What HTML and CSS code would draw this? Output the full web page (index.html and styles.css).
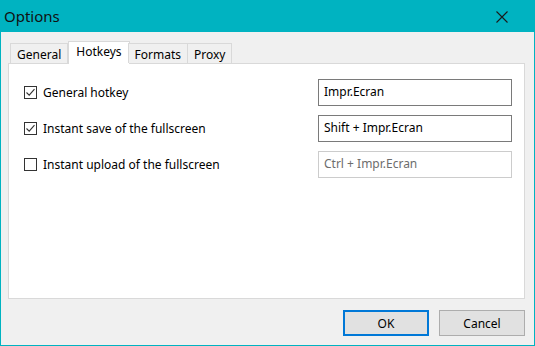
FILE: index.html
```html
<!DOCTYPE html>
<html lang="en">
<head>
  <meta charset="UTF-8" />
  <title>Options</title>
  <link rel="stylesheet" href="styles.css">
</head>
<body>
  <div class="window">
    <header class="titlebar">
      <span class="title">Options</span>
      <svg class="close" width="12" height="12" viewBox="0 0 12 12"><path d="M0.5 0.5L11.5 11.5M11.5 0.5L0.5 11.5" stroke="#1a1a1a" stroke-width="1.1" fill="none"/></svg>
    </header>
    <div class="content">
      <div class="tabs">
        <div class="tab">General</div>
        <div class="tab active">Hotkeys</div>
        <div class="tab">Formats</div>
        <div class="tab">Proxy</div>
      </div>
      <div class="panel">
        <div class="row">
          <label class="check"><span class="box checked"><svg width="11" height="11" viewBox="0 0 11 11"><path d="M1.5 5.5L4.2 8.2L9.5 2.2" stroke="#333" stroke-width="1.1" fill="none"/></svg></span>General hotkey</label>
          <div class="field">Impr.Ecran</div>
        </div>
        <div class="row">
          <label class="check"><span class="box checked"><svg width="11" height="11" viewBox="0 0 11 11"><path d="M1.5 5.5L4.2 8.2L9.5 2.2" stroke="#333" stroke-width="1.1" fill="none"/></svg></span>Instant save of the fullscreen</label>
          <div class="field">Shift + Impr.Ecran</div>
        </div>
        <div class="row">
          <label class="check"><span class="box"></span>Instant upload of the fullscreen</label>
          <div class="field disabled">Ctrl + Impr.Ecran</div>
        </div>
      </div>
      <div class="footer">
        <button class="btn default">OK</button>
        <button class="btn">Cancel</button>
      </div>
    </div>
  </div>
</body>
</html>
```

FILE: styles.css
```css
*,*::before,*::after{box-sizing:border-box;margin:0;padding:0}
body{width:535px;height:346px;overflow:hidden;font-family:'Noto Sans','Open Sans',sans-serif;font-size:12px;color:#000;background:#fff}
.window{width:535px;height:346px;display:flex;flex-direction:column;background:#f0f0f0;border:1px solid #00b3c1;border-top:none}
.titlebar{height:32px;background:#00b3c1;display:flex;align-items:center;justify-content:space-between;padding:0 27px 0 4px;margin:0 -1px}
.title{font-size:15px;color:#111}
.close{display:block;margin-top:1px}
.content{flex:1;display:flex;flex-direction:column;padding:9px 9px 0 7px}
.tabs{display:flex;align-items:flex-end;height:22px;padding-left:2px;position:relative;z-index:1}
.tab{height:20px;padding:2px 6px 0;border:1px solid #d9d9d9;border-bottom:none;margin-left:-1px;background:#f0f0f0;color:#000;display:flex;align-items:center;line-height:1}
.tab:first-child{margin-left:0}
.tab.active{height:23px;margin-bottom:-1px;background:#fff;padding:0 7px 3px;margin-left:0;margin-right:-1px}
.panel{height:236px;background:#fff;border:1px solid #d9d9d9;padding:15px 12px 0 15px;display:flex;flex-direction:column;gap:9px}
.row{height:27px;display:flex;align-items:center;justify-content:space-between}
.check{display:flex;align-items:center;gap:6px;font-size:12px}
.box{width:13px;height:13px;border:1px solid #333;background:#fff;display:flex;align-items:center;justify-content:center}
.box svg{display:block}
.field{width:194px;height:27px;border:1px solid #7a7a7a;background:#fff;padding:0 5px 2px;display:flex;align-items:center}
.field.disabled{border-color:#ccc;color:#6d6d6d}
.footer{flex:1;display:flex;justify-content:flex-end;align-items:flex-start;padding-top:11px;gap:10px}
.btn{width:86px;height:26px;background:#e1e1e1;border:1px solid #adadad;font-family:inherit;font-size:12px;color:#000}
.btn.default{border:2px solid #0078d7}
```
